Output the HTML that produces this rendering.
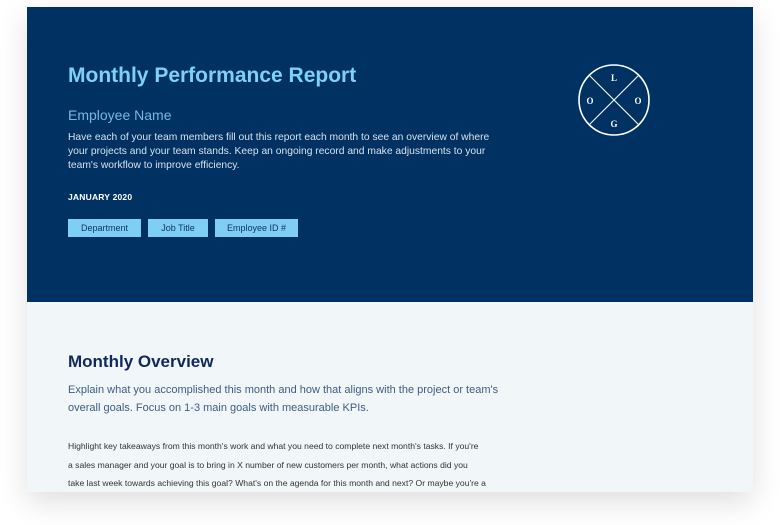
<!DOCTYPE html>
<html><head><style>
*{margin:0;padding:0;box-sizing:border-box}
body{width:780px;height:525px;background:#fff;font-family:"Liberation Sans",sans-serif;position:relative;overflow:hidden}
.card{position:absolute;left:27px;top:7px;width:726px;height:485px;background:#f1f6f9;box-shadow:0 10px 28px rgba(0,0,0,.13);overflow:hidden}
.hdr{position:absolute;left:0;top:0;width:726px;height:295px;background:#003163}
.a{position:absolute;white-space:nowrap}
h1{position:absolute;left:41px;top:57px;font-size:21px;color:#7fd0f6;font-weight:bold}
.en{left:41px;top:100px;font-size:14px;color:#79b6e2}
.p{position:absolute;left:41px;top:124px;width:430px;font-size:10.3px;line-height:14px;color:#d8e2ee}
.jan{left:41px;top:185px;font-size:8.5px;font-weight:bold;color:#fff;letter-spacing:.2px}
.btn{position:absolute;top:212px;height:18px;background:#7fcff4;color:#12325f;font-size:9px;line-height:18px;text-align:center}
h2{position:absolute;left:41px;top:345px;font-size:17px;color:#0f2a5a}
.ex{position:absolute;left:41px;top:374px;width:440px;font-size:11px;line-height:18px;color:#3d5d82}
.bd{position:absolute;left:41px;top:430px;white-space:nowrap;font-size:8.6px;line-height:18.6px;color:#333}
</style></head><body>
<div class="card">
<div class="hdr">
<h1>Monthly Performance Report</h1>
<div class="a en">Employee Name</div>
<div class="p">Have each of your team members fill out this report each month to see an overview of where your projects and your team stands. Keep an ongoing record and make adjustments to your team's workflow to improve efficiency.</div>
<div class="a jan">JANUARY 2020</div>
<div class="btn" style="left:41px;width:73px">Department</div>
<div class="btn" style="left:121px;width:60px">Job Title</div>
<div class="btn" style="left:188px;width:83px">Employee ID #</div>
<svg style="position:absolute;left:549px;top:55px" width="76" height="76" viewBox="0 0 76 76">
<circle cx="38" cy="38" r="35" fill="none" stroke="#fff" stroke-width="1.6"/>
<line x1="14" y1="14" x2="62" y2="62" stroke="#fff" stroke-width="1"/>
<line x1="62" y1="14" x2="14" y2="62" stroke="#fff" stroke-width="1"/>
<g fill="#fff" font-family="Liberation Serif,serif" font-weight="bold" font-size="9" text-anchor="middle">
<text x="38" y="19">L</text><text x="14" y="42">O</text><text x="62" y="42">O</text><text x="38" y="65">G</text></g>
</svg>
</div>
<h2>Monthly Overview</h2>
<div class="ex">Explain what you accomplished this month and how that aligns with the project or team's overall goals. Focus on 1-3 main goals with measurable KPIs.</div>
<div class="bd">Highlight key takeaways from this month's work and what you need to complete next month's tasks. If you're<br>a sales manager and your goal is to bring in X number of new customers per month, what actions did you<br>take last week towards achieving this goal? What's on the agenda for this month and next? Or maybe you're a</div>
</div>
</body></html>
